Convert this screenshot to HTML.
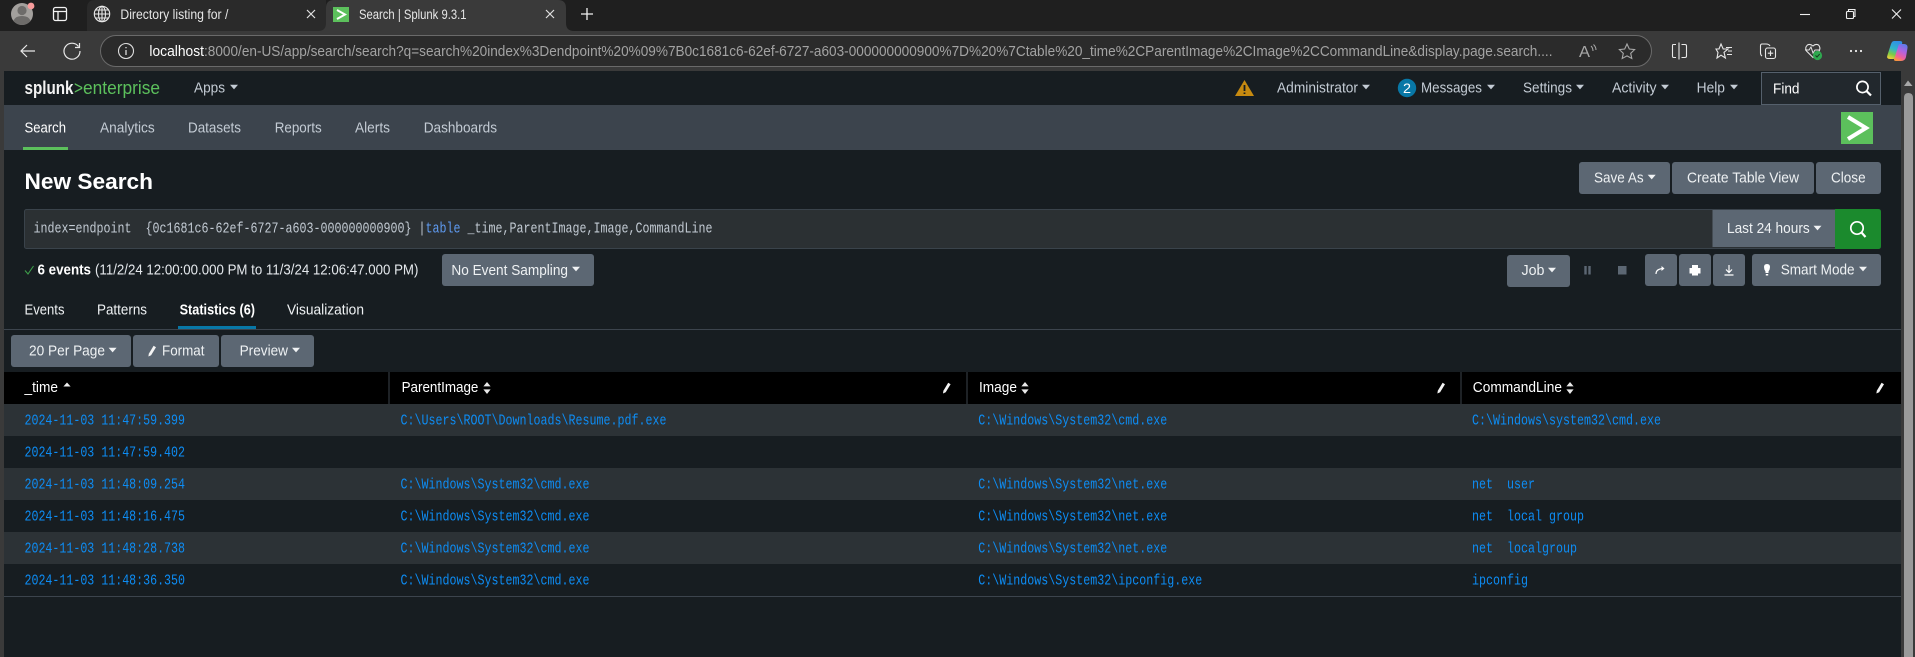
<!DOCTYPE html>
<html lang="en">
<head>
<meta charset="utf-8">
<title>Search | Splunk 9.3.1</title>
<style>
html,body{margin:0;padding:0;width:1915px;height:657px;overflow:hidden;background:#171d21}
svg{display:block}
text{font-family:"Liberation Sans",Arial,sans-serif;font-size:14.5px;fill:#c3cbd4;white-space:pre}
.w{fill:#fff}
.m{font-family:"Liberation Mono",monospace;font-size:14.5px;fill:#c3cbd4}
.l{font-family:"Liberation Mono",monospace;font-size:14.5px;fill:#0d8df5}
.b{fill:#eef1f3}
.t{fill:#e6e6e6;font-size:13.5px}
</style>
</head>
<body>
<svg width="1915" height="657" viewBox="0 0 1915 657" xmlns="http://www.w3.org/2000/svg" xml:space="preserve">
<defs>
<path id="c" d="M-4 -2.2H4L0 2.4Z" fill="#c3cbd4"/>
<path id="cw" d="M-4 -2.2H4L0 2.4Z" fill="#f0f2f4"/>
<path id="s" d="M0 -6L3.6 -1.6H-3.6ZM0 6L3.6 1.4H-3.6Z" fill="#e8e8e8"/>
<path id="p" d="M-3.6 5.5L-3.2 2.8L1.6 -5.2L4 -3.8L-0.9 4.2Z" fill="#f4f4f4"/>
<linearGradient id="g1" x1="0.6" y1="0" x2="0.3" y2="1"><stop offset="0" stop-color="#2f8fe8"/><stop offset="0.45" stop-color="#31b6c8"/><stop offset="0.75" stop-color="#7ccb45"/><stop offset="1" stop-color="#e8cf3a"/></linearGradient>
<linearGradient id="g2" x1="0.7" y1="0" x2="0.3" y2="1"><stop offset="0" stop-color="#5e7bea"/><stop offset="0.4" stop-color="#b163e0"/><stop offset="0.75" stop-color="#f0609a"/><stop offset="1" stop-color="#f7953e"/></linearGradient>
</defs>

<!-- browser chrome -->
<rect width="1915" height="31" fill="#1f1f1f"/>
<path d="M87 31V8Q87 0 95 0H326V31Z" fill="#2a2a2a"/>
<path d="M318 31Q326 31 326 23V8Q326 0 334 0H558Q566 0 566 8V23Q566 31 574 31Z" fill="#3a3a3a"/>
<rect y="31" width="1915" height="40" fill="#3a3a3a"/>
<circle cx="22" cy="14" r="11" fill="#a3a09d"/>
<circle cx="22" cy="10.5" r="4.6" fill="#6e6c6a"/>
<path d="M13.5 21Q15 16 22 16T30.5 21Q27 25 22 25T13.5 21Z" fill="#6e6c6a"/>
<circle cx="31" cy="6" r="3.4" fill="#f89c9c"/>
<rect x="53.5" y="7.5" width="13" height="13" rx="2" fill="none" stroke="#f2f2f2" stroke-width="1.3"/>
<path d="M53.5 11.5H66.5M58 11.5V20.5" fill="none" stroke="#f2f2f2" stroke-width="1.3"/>
<g fill="none" stroke="#e8e8e8" stroke-width="1.1"><circle cx="102" cy="14" r="7.7"/><ellipse cx="102" cy="14" rx="3.5" ry="7.7"/><path d="M102 6.3V21.7M94.3 14H109.7M95.4 10H108.6M95.4 18H108.6"/></g>
<text class="t" x="120.4" y="19" textLength="108" lengthAdjust="spacingAndGlyphs">Directory listing for /</text>
<path d="M307 10L315 18M315 10L307 18M546 10L554 18M554 10L546 18" stroke="#e0e0e0" stroke-width="1.2" fill="none"/>
<rect x="333" y="7" width="16" height="15" fill="#5cc05c"/>
<path d="M337 10L345 14.5L337 19" fill="none" stroke="#fff" stroke-width="2"/>
<text class="t" x="359" y="19" textLength="107.5" lengthAdjust="spacingAndGlyphs">Search | Splunk 9.3.1</text>
<path d="M581 14H593M587 8V20" stroke="#f0f0f0" stroke-width="1.3" fill="none"/>
<path d="M1800 14.5H1810" stroke="#eee" stroke-width="1.1"/>
<rect x="1846.5" y="11.5" width="7" height="7" rx="1" fill="none" stroke="#eee" stroke-width="1.1"/>
<path d="M1848.5 11V9.5H1855V16.5H1853.8" fill="none" stroke="#eee" stroke-width="1.1"/>
<path d="M1892 9.5L1901 18.5M1901 9.5L1892 18.5" stroke="#eee" stroke-width="1.1"/>

<path d="M28 45L22 51L28 57M22 51H36" transform="translate(-1 0)" fill="none" stroke="#e8e8e8" stroke-width="1.2"/>
<path d="M78.5 46.5A8 8 0 1 0 80 51" fill="none" stroke="#e8e8e8" stroke-width="1.2"/>
<path d="M79.5 43V47.5H75" fill="none" stroke="#e8e8e8" stroke-width="1.2"/>
<rect x="100.5" y="35.5" width="1551" height="31" rx="15.5" fill="#2b2b2b" stroke="#6a6a6a"/>
<circle cx="126" cy="51" r="7.5" fill="none" stroke="#dcdcdc" stroke-width="1.1"/>
<path d="M126 50V55M126 47V48.2" stroke="#dcdcdc" stroke-width="1.3"/>
<text x="149.4" y="56" style="fill:#fff;font-size:14.5px" textLength="54.6" lengthAdjust="spacingAndGlyphs">localhost</text>
<text x="204" y="56" style="fill:#a3a3a3;font-size:14.5px" textLength="1348.5" lengthAdjust="spacingAndGlyphs">:8000/en-US/app/search/search?q=search%20index%3Dendpoint%20%09%7B0c1681c6-62ef-6727-a603-000000000900%7D%20%7Ctable%20_time%2CParentImage%2CImage%2CCommandLine&amp;display.page.search....</text>
<text x="1579" y="57" style="fill:#a8a8a8;font-size:16px" textLength="11" lengthAdjust="spacingAndGlyphs">A</text>
<path d="M1591 46Q1593 48 1593 51M1593.5 44.5Q1596 47 1596 50" stroke="#a8a8a8" fill="none"/>
<path d="M1627 44L1629.3 49L1634.6 49.6L1630.7 53.3L1631.8 58.5L1627 55.9L1622.2 58.5L1623.3 53.3L1619.4 49.6L1624.7 49Z" fill="none" stroke="#a8a8a8" stroke-width="1.1"/>
<!-- split screen -->
<path d="M1676 44.5H1673Q1672.5 44.5 1672.5 46V56Q1672.5 57.5 1673.5 57.5H1676M1681.5 44.5H1685Q1686.5 44.5 1686.5 46V56Q1686.5 57.5 1685 57.5H1681.5" fill="none" stroke="#e8e8e8" stroke-width="1.1"/>
<path d="M1679 42.5V59.5" stroke="#e8e8e8" stroke-width="1.1"/>
<!-- favorites -->
<path d="M1721 44L1723.2 49H1728L1724 52.3L1725.4 58L1721 55.2L1717 58L1718 52.5L1716 49H1719Z" fill="none" stroke="#e8e8e8" stroke-width="1.1"/>
<path d="M1726 47.5H1732M1728 51H1732M1727 54.5H1732" stroke="#e8e8e8" stroke-width="1.1"/>
<!-- collections -->
<path d="M1766 44H1762Q1760.5 44 1760.5 46V53Q1760.5 55 1762 56M1766 44Q1769 44 1770 46" fill="none" stroke="#e8e8e8" stroke-width="1.1"/>
<rect x="1765.5" y="48" width="10" height="10.5" rx="2" fill="none" stroke="#e8e8e8" stroke-width="1.1"/>
<path d="M1770.5 50.5V56M1767.8 53.2H1773.2" stroke="#e8e8e8" stroke-width="1.1"/>
<!-- health -->
<path d="M1813 46Q1810 43.5 1807.5 45Q1804.5 47.5 1806.5 51L1813 57.5L1819 51.5Q1821 47.5 1818.5 45Q1815.5 43.5 1813 46Z" fill="none" stroke="#e4e4e4" stroke-width="1.1"/>
<path d="M1805 50H1809L1811 47L1813 53L1815 50H1820" fill="none" stroke="#e4e4e4"/>
<circle cx="1817.5" cy="55.5" r="4.6" fill="#2fa84f"/>
<path d="M1815.5 55.5L1817 57L1819.7 54" fill="none" stroke="#173b20" stroke-width="1"/>
<circle cx="1851" cy="51" r="1.1" fill="#eee"/><circle cx="1856" cy="51" r="1.1" fill="#eee"/><circle cx="1861" cy="51" r="1.1" fill="#eee"/>
<!-- copilot -->
<path d="M1894 41H1900Q1903 41 1902 44L1897 56Q1896 59 1893 59H1890Q1886 59 1887.5 55L1891 44Q1892 41 1894 41Z" fill="url(#g1)"/>
<path d="M1900 44H1904Q1908 44 1907.5 48L1906 57Q1905 61 1901 61H1896Q1893 61 1894.5 58L1898 47Q1898.5 44 1900 44Z" fill="url(#g2)"/>

<!-- scrollbar/page frame -->
<rect x="0" y="71" width="4" height="586" fill="#3a3a3a"/>
<rect x="1901" y="71" width="14" height="586" fill="#3a3a3a"/>
<path d="M1904 86L1908 80.5L1912.5 86Z" fill="#a8a8a8"/>
<path d="M1904 98Q1904 93 1908.5 93T1913 98V657H1904Z" fill="#9a9a9a"/>

<!-- splunk header -->
<path d="M4 105V78Q4 71 11 71H1901V105Z" fill="#171d21"/>
<text x="24.5" y="94" style="fill:#f2f2f2;font-size:18px;font-weight:bold" textLength="49" lengthAdjust="spacingAndGlyphs">splunk</text>
<text x="74" y="94" style="fill:#5cc05c;font-size:18px" textLength="9" lengthAdjust="spacingAndGlyphs">&gt;</text>
<text x="83" y="94" style="fill:#5cc05c;font-size:18px" textLength="77" lengthAdjust="spacingAndGlyphs">enterprise</text>
<text x="194" y="92.5" textLength="31" lengthAdjust="spacingAndGlyphs">Apps</text><use href="#c" x="234" y="87"/>
<path d="M1244.5 80L1254 96H1235Z" fill="#c78a10"/>
<path d="M1244.5 85V91M1244.5 92.5V94" stroke="#171d21" stroke-width="1.8"/>
<text x="1277" y="92.5" textLength="81" lengthAdjust="spacingAndGlyphs">Administrator</text><use href="#c" x="1366" y="87"/>
<circle cx="1407" cy="88" r="9.2" fill="#0877a6"/>
<text x="1403" y="93" style="fill:#fff;font-size:14px" textLength="8" lengthAdjust="spacingAndGlyphs">2</text>
<text x="1421" y="92.5" textLength="61" lengthAdjust="spacingAndGlyphs">Messages</text><use href="#c" x="1491" y="87"/>
<text x="1523" y="92.5" textLength="49" lengthAdjust="spacingAndGlyphs">Settings</text><use href="#c" x="1580" y="87"/>
<text x="1612" y="92.5" textLength="44.6" lengthAdjust="spacingAndGlyphs">Activity</text><use href="#c" x="1665" y="87"/>
<text x="1696.6" y="92.5" textLength="28.4" lengthAdjust="spacingAndGlyphs">Help</text><use href="#c" x="1734" y="87"/>
<rect x="1761.5" y="72.5" width="119" height="32" fill="#22282d" stroke="#55606c"/>
<text class="w" x="1773" y="93.5" textLength="26.5" lengthAdjust="spacingAndGlyphs">Find</text>
<circle cx="1862.5" cy="87" r="5.6" fill="none" stroke="#fff" stroke-width="1.7"/>
<path d="M1866.5 91L1871 95.5" stroke="#fff" stroke-width="2.2"/>

<!-- app bar -->
<rect x="4" y="105" width="1897" height="45" fill="#3c444d"/>
<text class="w" x="24.5" y="132.5" textLength="41.5" lengthAdjust="spacingAndGlyphs">Search</text>
<rect x="23" y="147" width="45" height="3" fill="#5cc05c"/>
<text x="100" y="132.5" textLength="54.7" lengthAdjust="spacingAndGlyphs">Analytics</text>
<text x="188" y="132.5" textLength="53" lengthAdjust="spacingAndGlyphs">Datasets</text>
<text x="274.7" y="132.5" textLength="47" lengthAdjust="spacingAndGlyphs">Reports</text>
<text x="355" y="132.5" textLength="35" lengthAdjust="spacingAndGlyphs">Alerts</text>
<text x="423.7" y="132.5" textLength="73.3" lengthAdjust="spacingAndGlyphs">Dashboards</text>
<rect x="1841" y="112" width="32" height="32" fill="#5cc05c"/>
<path d="M1848 117L1866 128L1848 139" fill="none" stroke="#fff" stroke-width="4"/>

<!-- title -->
<text x="24.5" y="189" style="fill:#fff;font-size:22px;font-weight:bold" textLength="128.5" lengthAdjust="spacingAndGlyphs">New Search</text>
<rect x="1579" y="162" width="91" height="32" rx="3" fill="#5c6773"/>
<rect x="1672" y="162" width="142" height="32" rx="3" fill="#5c6773"/>
<rect x="1816" y="162" width="65" height="32" rx="3" fill="#5c6773"/>
<text class="b" x="1594" y="182.5" textLength="49.6" lengthAdjust="spacingAndGlyphs">Save As</text><use href="#cw" x="1651.7" y="177"/>
<text class="b" x="1687" y="182.5" textLength="112" lengthAdjust="spacingAndGlyphs">Create Table View</text>
<text class="b" x="1831" y="182.5" textLength="34.6" lengthAdjust="spacingAndGlyphs">Close</text>

<!-- search bar -->
<rect x="24.5" y="209.5" width="1856" height="39" rx="2" fill="#2b3033" stroke="#3a434b"/>
<text class="m" x="33.5" y="232.5" textLength="385" lengthAdjust="spacingAndGlyphs">index=endpoint  {0c1681c6-62ef-6727-a603-000000000900} </text>
<text class="m" x="418.5" y="232.5" textLength="7" lengthAdjust="spacingAndGlyphs">|</text>
<text class="m" x="425.5" y="232.5" style="fill:#5f9bf2" textLength="35" lengthAdjust="spacingAndGlyphs">table</text>
<text class="m" x="467.5" y="232.5" textLength="245" lengthAdjust="spacingAndGlyphs">_time,ParentImage,Image,CommandLine</text>
<rect x="1712.5" y="210" width="122.5" height="37" fill="#5c6773"/>
<text class="b" x="1727" y="233" textLength="82.7" lengthAdjust="spacingAndGlyphs">Last 24 hours</text><use href="#cw" x="1817.5" y="228"/>
<path d="M1835 209H1878Q1881 209 1881 212V246Q1881 249 1878 249H1835Z" fill="#1b8a2d"/>
<circle cx="1857" cy="228" r="6.2" fill="none" stroke="#fff" stroke-width="1.7"/>
<path d="M1861.5 232.5L1865.5 237" stroke="#fff" stroke-width="2.2"/>

<!-- status -->
<path d="M25 270.5L28 274L33.5 266" fill="none" stroke="#3e9e4a" stroke-width="1.1"/>
<text x="37.5" y="274.5" style="fill:#fff;font-weight:bold" textLength="53.5" lengthAdjust="spacingAndGlyphs">6 events</text>
<text x="95" y="274.5" style="fill:#e4e8ec" textLength="323.4" lengthAdjust="spacingAndGlyphs">(11/2/24 12:00:00.000 PM to 11/3/24 12:06:47.000 PM)</text>
<rect x="442" y="254" width="152" height="32" rx="3" fill="#5c6773"/>
<text class="b" x="451.4" y="275" textLength="116.6" lengthAdjust="spacingAndGlyphs">No Event Sampling</text><use href="#cw" x="576" y="269"/>
<rect x="1507" y="255" width="63" height="32" rx="3" fill="#5c6773"/>
<text class="b" x="1521.5" y="275" textLength="23" lengthAdjust="spacingAndGlyphs">Job</text><use href="#cw" x="1552" y="270"/>
<path d="M1585.5 266V274.5M1589.5 266V274.5" stroke="#5c6773" stroke-width="2.4"/>
<rect x="1618" y="266" width="8.5" height="8.5" fill="#5c6773"/>
<rect x="1645" y="254" width="32" height="32" rx="3" fill="#5c6773"/>
<rect x="1679" y="254" width="32" height="32" rx="3" fill="#5c6773"/>
<rect x="1713" y="254" width="32" height="32" rx="3" fill="#5c6773"/>
<rect x="1752" y="254" width="129" height="32" rx="3" fill="#5c6773"/>
<path d="M1656 274Q1656 269 1663 268.5" fill="none" stroke="#fff" stroke-width="1.2"/>
<path d="M1661.5 266L1664.5 268.5L1661.5 271Z" fill="#fff"/>
<path d="M1692 265H1698V268H1700.5V273.5H1698V275.5H1692V273.5H1689.5V268H1692Z" fill="#fff"/>
<path d="M1729 265V272M1726 269.5L1729 272.5L1732 269.5M1724.5 275H1733.5" fill="none" stroke="#fff" stroke-width="1.2"/>
<path d="M1767 264Q1770 264 1770 267Q1770 269.5 1768.5 271.5V273H1765.5V271.5Q1764 269.5 1764 267Q1764 264 1767 264ZM1765.8 274H1768.2V275.5H1765.8Z" fill="#fff"/>
<text class="b" x="1780.7" y="274.5" textLength="73.9" lengthAdjust="spacingAndGlyphs">Smart Mode</text><use href="#cw" x="1863" y="269"/>

<!-- tabs -->
<text class="b" x="24.5" y="314.5" textLength="40" lengthAdjust="spacingAndGlyphs">Events</text>
<text class="b" x="97" y="314.5" textLength="50" lengthAdjust="spacingAndGlyphs">Patterns</text>
<text x="179.6" y="314.5" style="fill:#fff;font-weight:bold" textLength="75.4" lengthAdjust="spacingAndGlyphs">Statistics (6)</text>
<text class="b" x="287" y="314.5" textLength="77" lengthAdjust="spacingAndGlyphs">Visualization</text>
<rect x="4" y="329" width="1897" height="1" fill="#3c444d"/>
<rect x="178" y="326" width="78" height="3" fill="#0877a6"/>

<!-- table controls -->
<rect x="11" y="335" width="120" height="32" rx="3" fill="#5c6773"/>
<rect x="133" y="335" width="86" height="32" rx="3" fill="#5c6773"/>
<rect x="221" y="335" width="93" height="32" rx="3" fill="#5c6773"/>
<text class="b" x="29" y="355.5" textLength="76" lengthAdjust="spacingAndGlyphs">20 Per Page</text><use href="#cw" x="112.6" y="350"/>
<use href="#p" x="152" y="351"/>
<text class="b" x="162" y="355.5" textLength="42.5" lengthAdjust="spacingAndGlyphs">Format</text>
<text class="b" x="239.6" y="355.5" textLength="48.4" lengthAdjust="spacingAndGlyphs">Preview</text><use href="#cw" x="296" y="350"/>

<!-- table -->
<rect x="4" y="372" width="1897" height="32" fill="#000"/>
<rect x="388.5" y="372" width="1" height="32" fill="#3c444d"/>
<rect x="966.5" y="372" width="1" height="32" fill="#3c444d"/>
<rect x="1460.5" y="372" width="1" height="32" fill="#3c444d"/>
<text class="w" x="24.5" y="392" textLength="33.5" lengthAdjust="spacingAndGlyphs">_time</text>
<path d="M67 382.5L70.6 386.5H63.4Z" fill="#f0f0f0"/>
<text class="w" x="401.6" y="392" textLength="76.8" lengthAdjust="spacingAndGlyphs">ParentImage</text><use href="#s" x="487" y="388"/>
<text class="w" x="979" y="392" textLength="38" lengthAdjust="spacingAndGlyphs">Image</text><use href="#s" x="1025" y="388"/>
<text class="w" x="1472.8" y="392" textLength="89.2" lengthAdjust="spacingAndGlyphs">CommandLine</text><use href="#s" x="1570" y="388"/>
<use href="#p" x="946.6" y="388"/><use href="#p" x="1441" y="388"/><use href="#p" x="1880" y="388"/>

<rect x="4" y="404" width="1897" height="32" fill="#2c3236"/>
<rect x="4" y="468" width="1897" height="32" fill="#2c3236"/>
<rect x="4" y="532" width="1897" height="32" fill="#2c3236"/>
<rect x="4" y="596" width="1897" height="1" fill="#3c444d"/>

<text class="l" x="24.5" y="424.5" textLength="160.5" lengthAdjust="spacingAndGlyphs">2024-11-03 11:47:59.399</text>
<text class="l" x="400.5" y="424.5" textLength="266" lengthAdjust="spacingAndGlyphs">C:\Users\ROOT\Downloads\Resume.pdf.exe</text>
<text class="l" x="978.3" y="424.5" textLength="189" lengthAdjust="spacingAndGlyphs">C:\Windows\System32\cmd.exe</text>
<text class="l" x="1472" y="424.5" textLength="189" lengthAdjust="spacingAndGlyphs">C:\Windows\system32\cmd.exe</text>

<text class="l" x="24.5" y="456.5" textLength="160.5" lengthAdjust="spacingAndGlyphs">2024-11-03 11:47:59.402</text>

<text class="l" x="24.5" y="488.5" textLength="160.5" lengthAdjust="spacingAndGlyphs">2024-11-03 11:48:09.254</text>
<text class="l" x="400.5" y="488.5" textLength="189" lengthAdjust="spacingAndGlyphs">C:\Windows\System32\cmd.exe</text>
<text class="l" x="978.3" y="488.5" textLength="189" lengthAdjust="spacingAndGlyphs">C:\Windows\System32\net.exe</text>
<text class="l" x="1472" y="488.5" textLength="63" lengthAdjust="spacingAndGlyphs">net  user</text>

<text class="l" x="24.5" y="520.5" textLength="160.5" lengthAdjust="spacingAndGlyphs">2024-11-03 11:48:16.475</text>
<text class="l" x="400.5" y="520.5" textLength="189" lengthAdjust="spacingAndGlyphs">C:\Windows\System32\cmd.exe</text>
<text class="l" x="978.3" y="520.5" textLength="189" lengthAdjust="spacingAndGlyphs">C:\Windows\System32\net.exe</text>
<text class="l" x="1472" y="520.5" textLength="112" lengthAdjust="spacingAndGlyphs">net  local group</text>

<text class="l" x="24.5" y="552.5" textLength="160.5" lengthAdjust="spacingAndGlyphs">2024-11-03 11:48:28.738</text>
<text class="l" x="400.5" y="552.5" textLength="189" lengthAdjust="spacingAndGlyphs">C:\Windows\System32\cmd.exe</text>
<text class="l" x="978.3" y="552.5" textLength="189" lengthAdjust="spacingAndGlyphs">C:\Windows\System32\net.exe</text>
<text class="l" x="1472" y="552.5" textLength="105" lengthAdjust="spacingAndGlyphs">net  localgroup</text>

<text class="l" x="24.5" y="584.5" textLength="160.5" lengthAdjust="spacingAndGlyphs">2024-11-03 11:48:36.350</text>
<text class="l" x="400.5" y="584.5" textLength="189" lengthAdjust="spacingAndGlyphs">C:\Windows\System32\cmd.exe</text>
<text class="l" x="978.3" y="584.5" textLength="224" lengthAdjust="spacingAndGlyphs">C:\Windows\System32\ipconfig.exe</text>
<text class="l" x="1472" y="584.5" textLength="56" lengthAdjust="spacingAndGlyphs">ipconfig</text>
</svg>
</body>
</html>
